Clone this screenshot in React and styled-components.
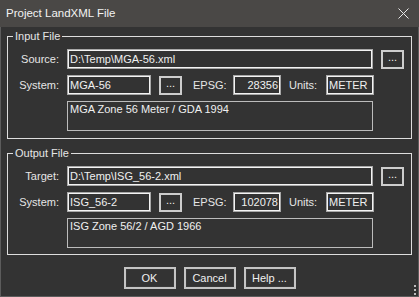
import React from 'react';
import styled, { createGlobalStyle } from 'styled-components';

const GlobalStyle = createGlobalStyle`
  html, body {
    margin: 0;
    padding: 0;
    background: #333333;
  }
  * {
    box-sizing: border-box;
  }
`

const Window = styled.div`
  position: relative;
  width: 419px;
  height: 297px;
  border: 1px solid #5c5c5c;
  border-top: none;
  background: #333333;
  display: flex;
  flex-direction: column;
  font-family: "Liberation Sans", Arial, sans-serif;
  font-size: 11px;
  line-height: 13px;
  color: #e6e6e6;
`
const TitleBar = styled.div`
  height: 27px;
  margin: 0 -1px;
  background: #4a4846;
  display: flex;
  align-items: center;
  justify-content: space-between;
  padding: 0 10px 0 6px;
`
const Title = styled.span`
  font-size: 11.5px;
  color: #f2f2f2;
  margin-top: -1px;
`
const Body = styled.div`
  padding: 9px 6px 0 6px;
  display: flex;
  flex-direction: column;
`
const Group = styled.div`
  position: relative;
  border: 1px solid #dedede;
  padding: 12px 0 ${(p) => (p.tight ? 6 : 7)}px 0;
  margin-top: ${(p) => (p.second ? 14 : 0)}px;
  display: flex;
  flex-direction: column;
  gap: 6px;
`
const Legend = styled.span`
  position: absolute;
  left: 5px;
  top: -7px;
  padding: 0 2px;
  background: #333333;
  color: #e6e6e6;
`
const Row = styled.div`
  display: flex;
  align-items: center;
  height: 20px;
`
const Label = styled.span`
  width: ${(p) => p.w || 51}px;
  margin-left: ${(p) => p.ml || 0}px;
  margin-right: ${(p) => (p.right ? 8 : 0)}px;
  text-align: ${(p) => (p.right ? 'right' : 'left')};
  white-space: nowrap;
`
const Field = styled.div`
  width: ${(p) => p.w}px;
  height: 20px;
  border: 1px solid #a8a8a8;
  box-shadow: inset 0 0 0 1px #f4f4f4;
  padding: 0 ${(p) => (p.alignRight ? 2 : 2)}px;
  display: flex;
  align-items: center;
  justify-content: ${(p) => (p.alignRight ? 'flex-end' : 'flex-start')};
  color: #f0f0f0;
  white-space: nowrap;
  overflow: hidden;
`
const Browse = styled.button`
  width: 23px;
  height: 19px;
  margin-left: ${(p) => p.ml || 8}px;
  margin-top: 1px;
  padding: 0 0 4px 0;
  border: 2px solid #cdcdcd;
  background: #333333;
  color: #f0f0f0;
  font-family: inherit;
  font-size: 11px;
  line-height: 11px;
  display: flex;
  align-items: flex-end;
  justify-content: center;
`
const DescRow = styled.div`
  padding-left: 59px;
`
const Desc = styled.div`
  width: 306px;
  height: 30px;
  border: 1px solid #bcbcbc;
  padding: 1px 2px;
  color: #f0f0f0;
`
const Buttons = styled.div`
  display: flex;
  justify-content: center;
  gap: 8px;
  margin-top: 12px;
`
const Button = styled.button`
  width: 52px;
  height: 22px;
  border: 2px solid #c4c4c4;
  box-shadow: inset 0 0 0 1px #3a3a3a;
  background: #333333;
  color: #f0f0f0;
  font-family: "Liberation Sans", Arial, sans-serif;
  font-size: 11px;
  padding: 0;
`
const Grip = styled.svg`
  position: absolute;
  right: 2px;
  bottom: 1px;
`

const CloseIcon = () => (
  <svg width="11" height="11" viewBox="0 0 11 11">
    <path d="M0.5 0.5 L10.5 10.5 M10.5 0.5 L0.5 10.5" stroke="#e8e8e8" strokeWidth="1" fill="none" />
  </svg>
);

const sections = [
  {
    legend: 'Input File',
    fileLabel: 'Source:',
    file: 'D:\\Temp\\MGA-56.xml',
    system: 'MGA-56',
    epsg: '28356',
    units: 'METER',
    desc: 'MGA Zone 56 Meter / GDA 1994',
  },
  {
    legend: 'Output File',
    fileLabel: 'Target:',
    file: 'D:\\Temp\\ISG_56-2.xml',
    system: 'ISG_56-2',
    epsg: '102078',
    units: 'METER',
    desc: 'ISG Zone 56/2 / AGD 1966',
  },
];

class App extends React.Component {
  render() {
    return (
      <>
        <GlobalStyle />
        <Window>
          <TitleBar>
            <Title>Project LandXML File</Title>
            <CloseIcon />
          </TitleBar>
          <Body>
            {sections.map((s, i) => (
              <Group key={s.legend} second={i === 1} tight={i === 1}>
                <Legend>{s.legend}</Legend>
                <Row>
                  <Label right>{s.fileLabel}</Label>
                  <Field w={306}>{s.file}</Field>
                  <Browse>...</Browse>
                </Row>
                <Row>
                  <Label right>System:</Label>
                  <Field w={84}>{s.system}</Field>
                  <Browse>...</Browse>
                  <Label ml={11} w={40}>EPSG:</Label>
                  <Field w={48} alignRight>{s.epsg}</Field>
                  <Label ml={8} w={37}>Units:</Label>
                  <Field w={48}>{s.units}</Field>
                </Row>
                <DescRow>
                  <Desc>{s.desc}</Desc>
                </DescRow>
              </Group>
            ))}
            <Buttons>
              <Button>OK</Button>
              <Button>Cancel</Button>
              <Button>Help ...</Button>
            </Buttons>
          </Body>
          <Grip width="2" height="10" viewBox="0 0 2 10">
            <rect x="0" y="0" width="2" height="2" fill="#bdbdbd" />
            <rect x="0" y="4" width="2" height="2" fill="#bdbdbd" />
            <rect x="0" y="8" width="2" height="2" fill="#bdbdbd" />
          </Grip>
        </Window>
      </>
    );
  }
}

export default App;
